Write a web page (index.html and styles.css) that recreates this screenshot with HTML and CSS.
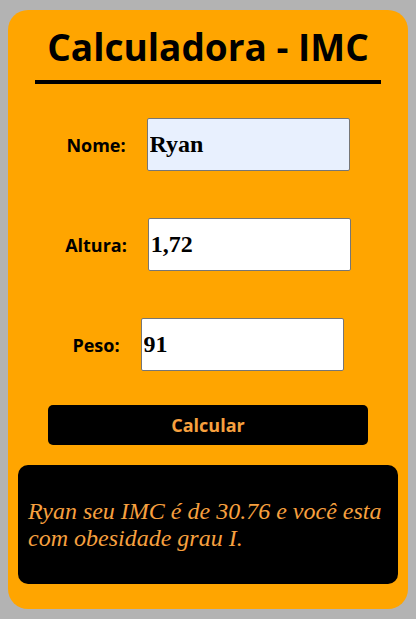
FILE: index.html
```html
<!DOCTYPE html>
<html lang="pt-BR">
<head>
<meta charset="utf-8">
<title>Calculadora - IMC</title>
<link rel="stylesheet" href="styles.css">
</head>
<body>
<main class="card">
  <h1 class="title">Calculadora - IMC</h1>
  <div class="divider"></div>
  <div class="fields">
    <div class="row">
      <label class="label" for="nome">Nome:</label>
      <input class="input input-filled" id="nome" type="text" value="Ryan">
    </div>
    <div class="row">
      <label class="label" for="altura">Altura:</label>
      <input class="input" id="altura" type="text" value="1,72">
    </div>
    <div class="row">
      <label class="label" for="peso">Peso:</label>
      <input class="input" id="peso" type="text" value="91">
    </div>
  </div>
  <button class="btn" type="button">Calcular</button>
  <div class="result">
    <p class="result-text">Ryan seu IMC é de 30.76 e você esta com obesidade grau I.</p>
  </div>
</main>
</body>
</html>
```

FILE: styles.css
```css
html, body {
  margin: 0;
  padding: 0;
}
body {
  background: #b3b3b3;
  padding: 10px 8px;
  font-family: "Open Sans", "DejaVu Sans", sans-serif;
}
.card {
  box-sizing: border-box;
  width: 400px;
  height: 599px;
  background: #ffa500;
  border-radius: 20px;
  padding: 14px 10px 0;
  display: flex;
  flex-direction: column;
  align-items: center;
}
.title {
  margin: 0;
  font-size: 37px;
  line-height: 46px;
  font-weight: 700;
  color: #000;
  text-align: center;
}
.divider {
  align-self: stretch;
  margin: 10px 17px 0;
  height: 4px;
  background: #000;
}
.fields {
  margin-top: 34px;
  display: flex;
  flex-direction: column;
  gap: 47px;
}
.row {
  display: flex;
  justify-content: center;
  align-items: center;
  gap: 21px;
}
.label {
  font-size: 18px;
  font-weight: 700;
  color: #000;
}
.input {
  box-sizing: border-box;
  width: 203px;
  height: 53px;
  border: 1px solid #767676;
  border-radius: 2px;
  background: #fff;
  padding: 0 2px;
  font-family: "Liberation Serif", serif;
  font-size: 24px;
  font-weight: 700;
  color: #000;
}
.input-filled {
  background: #e8f0fe;
}
.btn {
  margin-top: 34px;
  width: 320px;
  height: 40px;
  border: none;
  border-radius: 5px;
  background: #000;
  color: #f7a03f;
  font-family: "Open Sans", "DejaVu Sans", sans-serif;
  font-size: 18px;
  font-weight: 700;
}
.result {
  box-sizing: border-box;
  margin-top: 20px;
  align-self: stretch;
  height: 119px;
  background: #000;
  border-radius: 10px;
  padding: 0 10px;
  display: flex;
  align-items: center;
}
.result-text {
  margin: 0;
  font-family: "Liberation Serif", serif;
  font-style: italic;
  font-size: 24px;
  line-height: 27px;
  color: #f7a03f;
}
```
